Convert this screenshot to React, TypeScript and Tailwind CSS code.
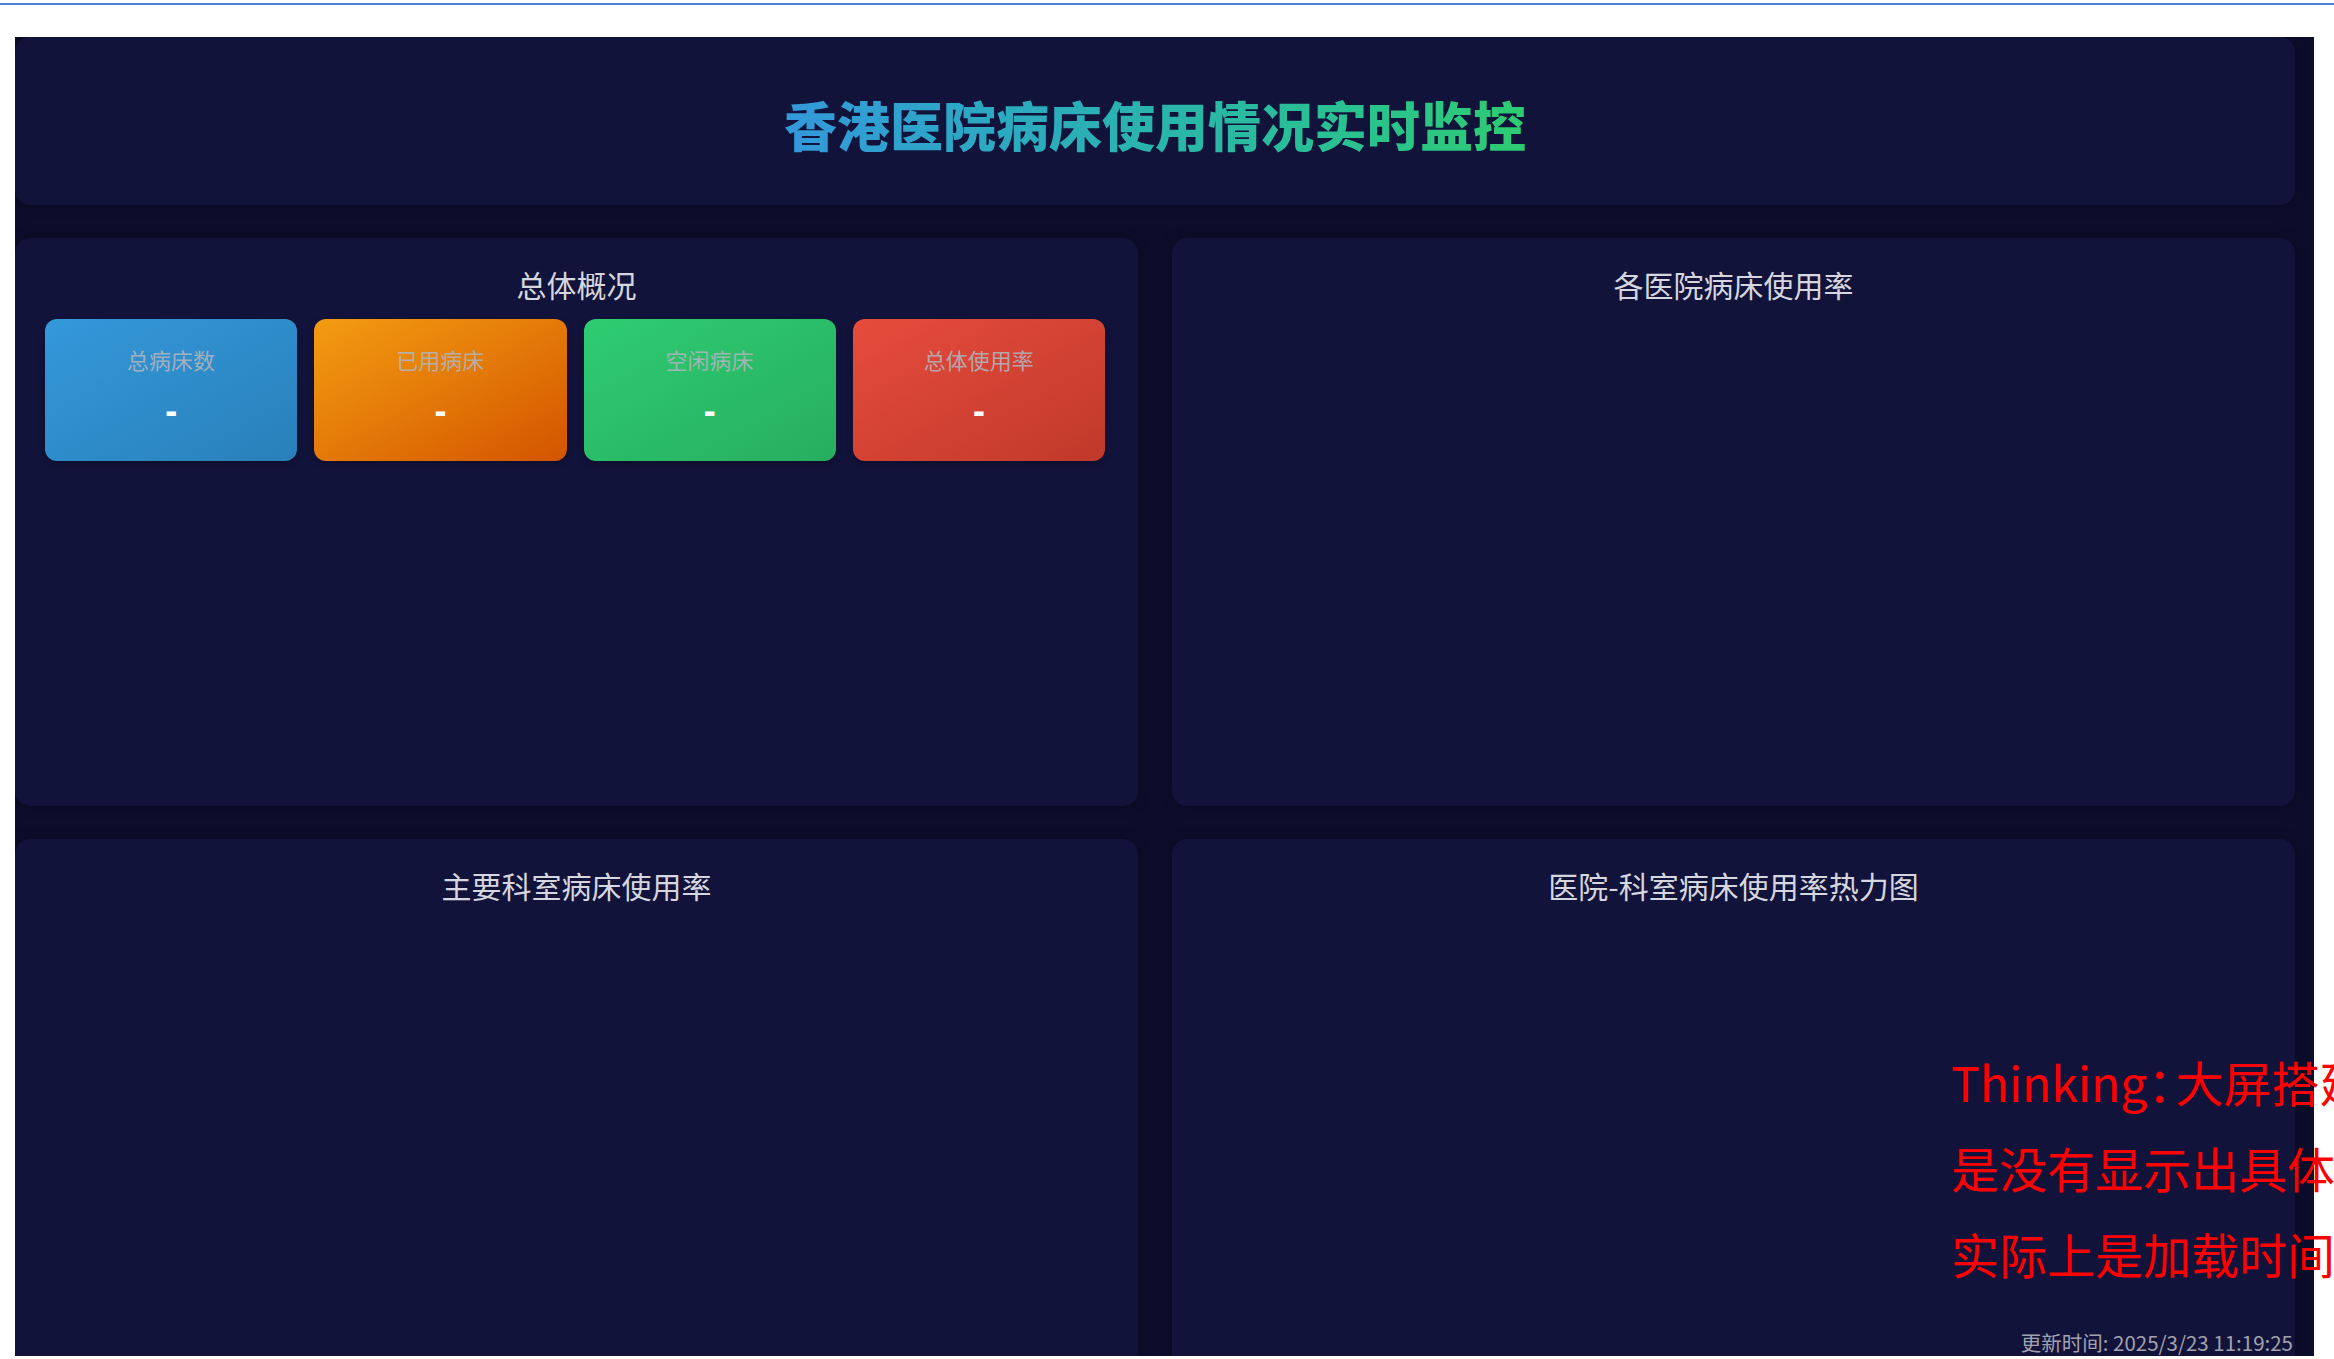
const STATS = [
  { label: "总病床数", bg: "bg-gradient-to-br from-[#3498db] to-[#2980b9]" },
  { label: "已用病床", bg: "bg-gradient-to-br from-[#f39c12] to-[#d35400]" },
  { label: "空闲病床", bg: "bg-gradient-to-br from-[#2ecc71] to-[#27ae60]" },
  { label: "总体使用率", bg: "bg-gradient-to-br from-[#e74c3c] to-[#c0392b]" },
];

function Panel({ title, children }: { title: string; children?: React.ReactNode }) {
  return (
    <div className="flex flex-col rounded-[15px] bg-[#12133b] pt-[26px] shadow-[0_0_12px_rgba(0,0,0,0.35)]">
      <h2 className="text-center text-[30px] leading-[40px] text-[#d6d6de]">{title}</h2>
      {children}
    </div>
  );
}

export default function App() {
  return (
    <div className="relative h-screen w-full overflow-hidden bg-white font-['Noto_Sans_CJK_SC',sans-serif]">
      <div className="mt-[3px] h-[2px] bg-[#4a7fd6]" />

      <div className="ml-[15px] mt-[32px] flex h-[1319px] w-[2299px] flex-col gap-[33px] overflow-hidden bg-[#0c0d2b] pr-[19px]">
        <header className="flex h-[168px] shrink-0 items-center justify-center rounded-[15px] bg-[#12133b] pt-[6px] shadow-[0_0_12px_rgba(0,0,0,0.35)]">
          <h1 className="bg-gradient-to-r from-[#3498db] to-[#2ecc71] bg-clip-text text-[53px] font-black leading-[64px] text-transparent">
            香港医院病床使用情况实时监控
          </h1>
        </header>

        <div className="grid shrink-0 grid-cols-2 grid-rows-[568px_568px] gap-x-[34px] gap-y-[33px]">
          <Panel title="总体概况">
            <div className="mt-[15px] grid grid-cols-4 gap-[17px] pl-[30px] pr-[33px]">
              {STATS.map((s) => (
                <div
                  key={s.label}
                  className={`flex h-[142px] flex-col items-center rounded-[12px] pt-[25px] shadow-[0_2px_6px_rgba(0,0,0,0.3)] ${s.bg}`}
                >
                  <div className="text-[22px] leading-[30px] text-[#b0b4bc]/90">{s.label}</div>
                  <div className="mt-[17px] font-['Liberation_Sans',sans-serif] text-[36px] font-bold leading-[40px] text-white">
                    -
                  </div>
                </div>
              ))}
            </div>
          </Panel>
          <Panel title="各医院病床使用率" />
          <Panel title="主要科室病床使用率" />
          <Panel title="医院-科室病床使用率热力图" />
        </div>
      </div>

      <div className="absolute left-[1951px] top-[1038px] whitespace-nowrap text-[48px] leading-[86px] text-[#ff0000]">
        <p>
          Thinking<span className="mr-[4px] [font-feature-settings:'halt']">：</span>大屏搭建
        </p>
        <p>是没有显示出具体</p>
        <p>实际上是加载时间</p>
      </div>

      <div className="absolute bottom-[3px] right-[41px] text-[20.5px] leading-[28px] text-[#a2a2ae]">
        更新时间: 2025/3/23 11:19:25
      </div>
    </div>
  );
}
